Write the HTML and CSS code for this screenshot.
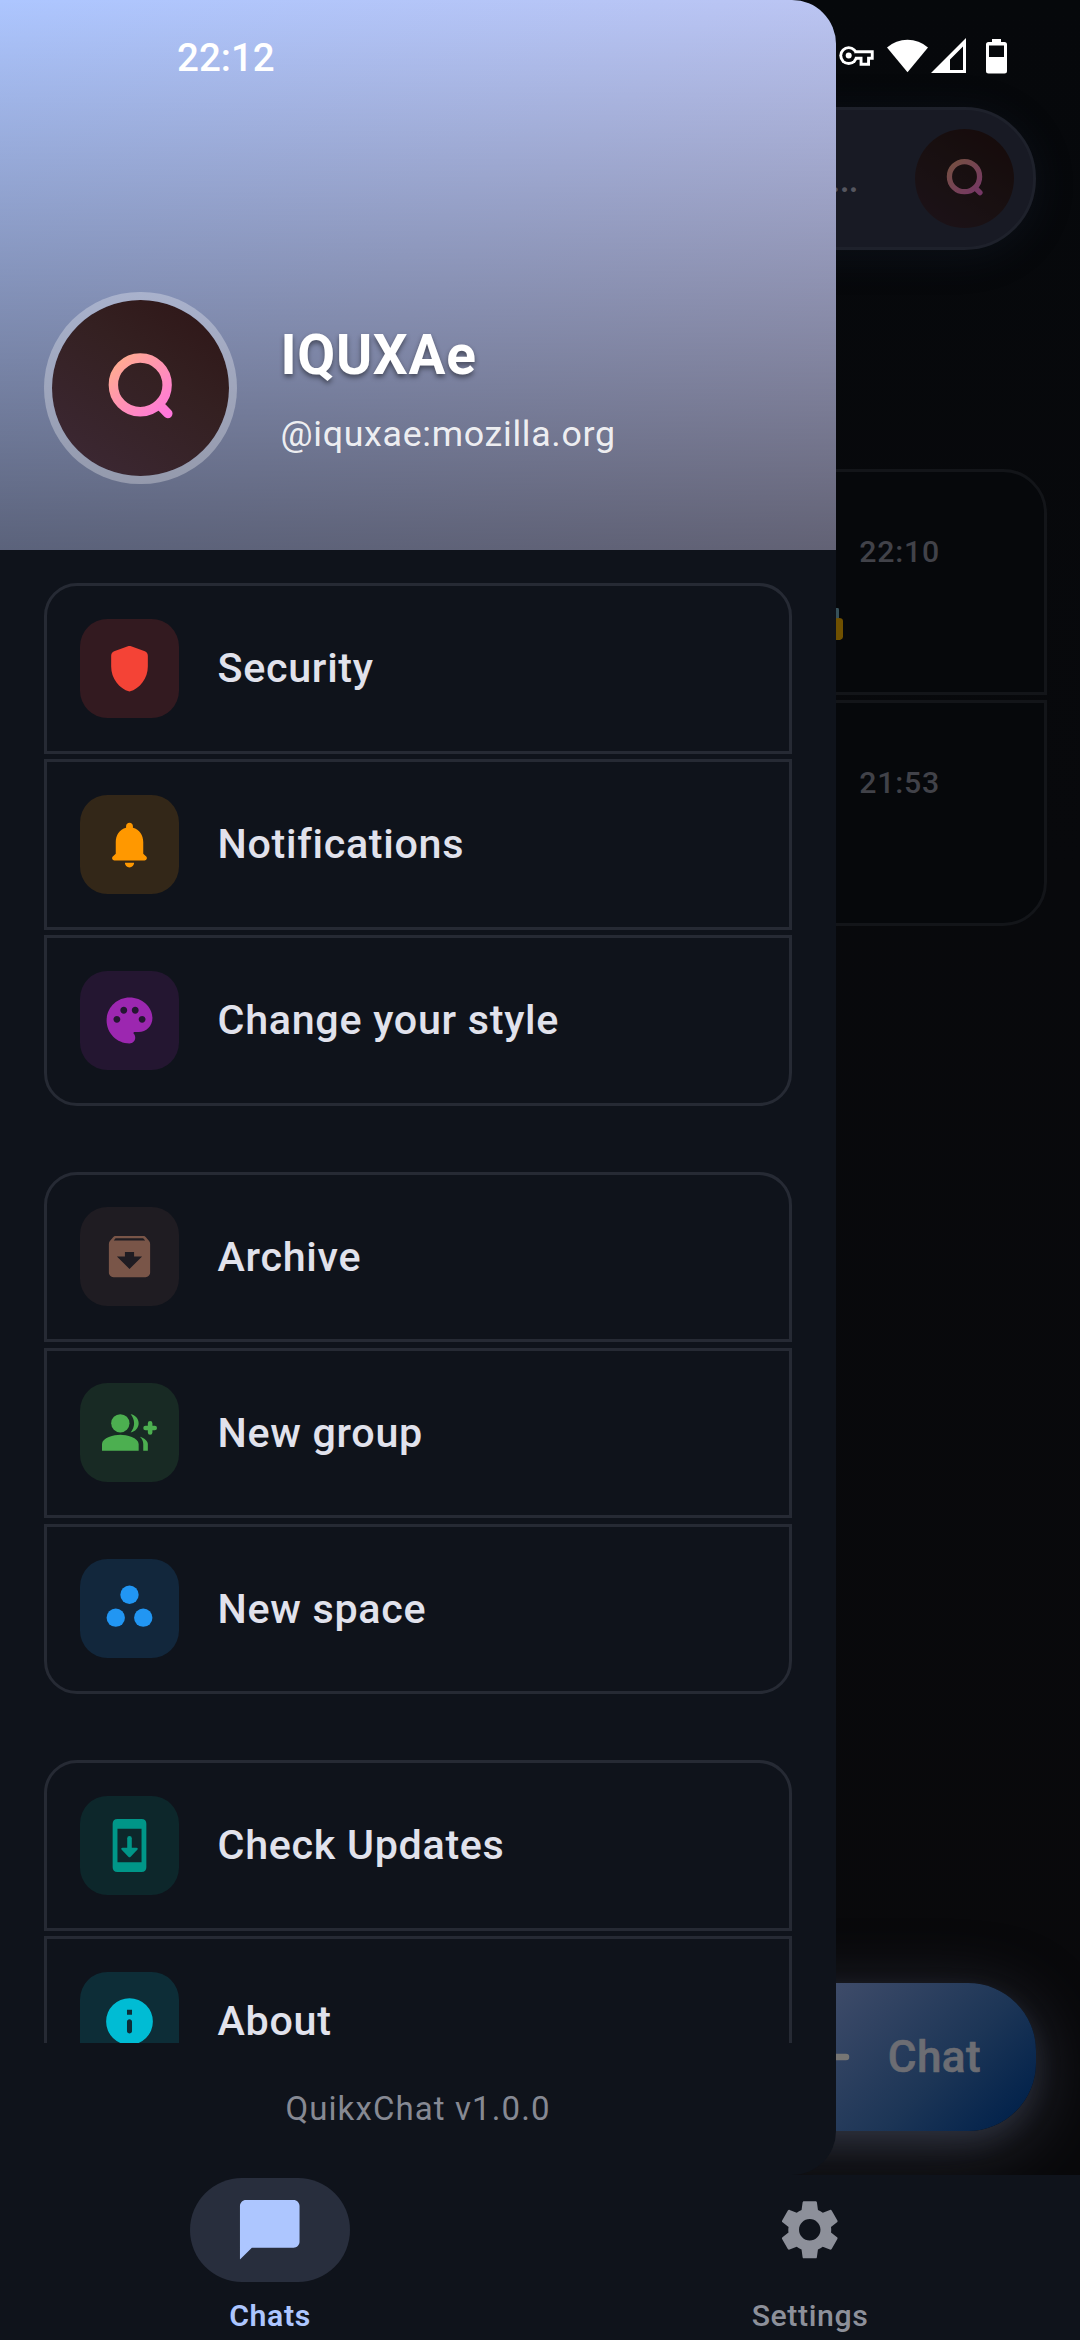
FILE: index.html
```html
<!DOCTYPE html>
<html lang="en">
<head>
<meta charset="utf-8">
<title>QuikxChat</title>
<link rel="stylesheet" href="styles.css">
</head>
<body>
<svg class="defs" width="0" height="0" aria-hidden="true">
  <defs>
    <linearGradient id="q-stroke" gradientUnits="userSpaceOnUse" x1="66" y1="60" x2="116" y2="114">
      <stop offset="0" stop-color="#ffab91"/><stop offset="1" stop-color="#ff76dc"/>
    </linearGradient>
    <symbol id="logo-q" viewBox="0 0 176 176">
      <circle cx="88" cy="84.7" r="26.8" fill="none" stroke="url(#q-stroke)" stroke-width="9.4"/>
      <path d="M107 104.5l8.5 8.7" fill="none" stroke="url(#q-stroke)" stroke-width="9.4" stroke-linecap="round"/>
    </symbol>
  </defs>
</svg>
<div class="app">
  <main class="chats">
    <div class="search"><span class="search-hint">…</span><svg class="avatar avatar-small"><use href="#logo-q"/></svg></div>
    <div class="chat-list">
      <article class="chat first">
        <time>22:10</time>
        <svg class="lock" width="30" height="32" viewBox="0 0 30 32"><path d="M7 13V2h16.500v12" fill="none" stroke="#37515a" stroke-width="5" stroke-linejoin="round"/><path d="M0 12l26-2q4 0 4 3v16q0 2-3 3H0z" fill="#6f5000"/></svg>
      </article>
      <article class="chat last"><time>21:53</time></article>
    </div>
    <button class="fab"><svg width="42" height="42" viewBox="0 0 42 42"><path d="M7 21h28M21 7v28" stroke="#777674" stroke-width="6.5" stroke-linecap="round"/></svg><span>Chat</span></button>
  </main>

  <nav class="bottom-nav">
    <div class="tab active">
      <span class="pill"><svg viewBox="0 0 24 24"><path d="M20 2H4c-1.1 0-2 .9-2 2v18l4-4h14c1.1 0 2-.9 2-2V4c0-1.100-.9-2-2-2z"/></svg></span>
      <span>Chats</span>
    </div>
    <div class="tab">
      <span class="pill"><svg viewBox="0 0 24 24"><path d="M19.14 12.94c.04-.3.06-.61.06-.94 0-.32-.02-.64-.07-.94l2.030-1.580c.18-.14.23-.41.12-.61l-1.920-3.320c-.12-.22-.37-.29-.59-.22l-2.390.96c-.5-.38-1.030-.7-1.620-.94l-.36-2.540c-.04-.24-.24-.41-.48-.41h-3.840c-.24 0-.43.17-.47.41l-.36 2.540c-.59.24-1.130.57-1.620.94l-2.390-.96c-.22-.08-.47 0-.59.22L2.740 8.870c-.12.21-.08.47.12.61l2.030 1.580c-.05.3-.09.63-.09.94s.02.64.07.94l-2.030 1.580c-.18.14-.23.41-.12.61l1.920 3.320c.12.22.37.29.59.22l2.390-.96c.5.38 1.030.7 1.620.94l.36 2.540c.05.24.24.41.48.41h3.840c.24 0 .44-.17.47-.41l.36-2.540c.59-.24 1.130-.56 1.620-.94l2.390.96c.22.08.47 0 .59-.22l1.920-3.320c.12-.22.07-.47-.12-.61l-2.010-1.580zM12 15.600c-1.980 0-3.600-1.620-3.600-3.600s1.620-3.600 3.600-3.600 3.600 1.620 3.600 3.600-1.620 3.600-3.600 3.600z"/></svg></span>
      <span>Settings</span>
    </div>
  </nav>

  <aside class="drawer">
    <header class="profile">
      <svg class="avatar"><use href="#logo-q"/></svg>
      <div class="who"><h1>IQUXAe</h1><p>@iquxae:mozilla.org</p></div>
    </header>
    <div class="menu">
      <section class="group">
        <a class="item red"><span class="icon"><svg viewBox="0 0 24 24"><path d="M11.3 2.26l-6 2.25C4.52 4.81 4 5.55 4 6.39v4.7c0 5.05 3.41 9.76 8 10.91 4.59-1.15 8-5.86 8-10.91v-4.7c0-.83-.52-1.580-1.300-1.870l-6-2.250c-.45-.18-.95-.18-1.400-.01z"/></svg></span>Security</a>
        <a class="item orange"><span class="icon"><svg viewBox="0 0 24 24"><path d="M12 22c1.100 0 2-.9 2-2h-4c0 1.100.89 2 2 2zm6-6v-5c0-3.070-1.640-5.640-4.500-6.320V4c0-.83-.67-1.500-1.500-1.500s-1.500.67-1.500 1.500v.68C7.630 5.360 6 7.920 6 11v5l-1.290 1.290c-.63.63-.19 1.710.7 1.710h13.170c.89 0 1.340-1.080.71-1.710L18 16z"/></svg></span>Notifications</a>
        <a class="item purple"><span class="icon"><svg viewBox="0 0 24 24"><path d="M12 2C6.490 2 2 6.490 2 12s4.490 10 10 10c1.380 0 2.500-1.120 2.500-2.500 0-.61-.23-1.200-.64-1.670-.08-.1-.13-.21-.13-.33 0-.28.22-.5.5-.5H16c3.310 0 6-2.690 6-6C22 6.040 17.510 2 12 2zm5.500 11c-.83 0-1.500-.67-1.500-1.500s.67-1.500 1.500-1.500 1.500.67 1.500 1.500-.67 1.500-1.500 1.500zm-3-4c-.83 0-1.500-.67-1.500-1.500S13.670 6 14.500 6s1.500.67 1.500 1.500S15.330 9 14.500 9zM5 11.500c0-.83.67-1.500 1.500-1.500s1.500.67 1.500 1.500S7.330 13 6.500 13 5 12.330 5 11.500zm6-4c0 .83-.67 1.500-1.500 1.500S8 8.330 8 7.500 8.670 6 9.500 6s1.500.67 1.500 1.500z"/></svg></span>Change your style</a>
      </section>
      <section class="group">
        <a class="item brown"><span class="icon"><svg viewBox="0 0 24 24"><path d="M20.540 5.230l-1.390-1.680C18.880 3.210 18.470 3 18 3H6c-.47 0-.88.21-1.160.55L3.460 5.230C3.170 5.570 3 6.020 3 6.500V19c0 1.100.9 2 2 2h14c1.100 0 2-.9 2-2V6.500c0-.48-.17-.93-.46-1.270zM12 17.500L6.500 12H10v-2h4v2h3.500L12 17.500zM5.120 5l.81-1h12l.94 1H5.120z"/></svg></span>Archive</a>
        <a class="item green"><span class="icon"><svg viewBox="0 0 24 24"><circle cx="8" cy="8" r="4"/><path d="M8 13c-2.670 0-8 1.340-8 4v3h16v-3c0-2.660-5.330-4-8-4zM12.510 4.050C13.430 5.110 14 6.490 14 8s-.57 2.890-1.490 3.950C14.470 11.700 16 10.040 16 8s-1.530-3.700-3.490-3.950zM16.530 13.830C17.420 14.660 18 15.700 18 17v3h2v-3c0-1.450-1.590-2.510-3.470-3.170z"/><path d="M21 8v4M19 10h4" stroke="currentColor" stroke-width="2" stroke-linecap="round"/></svg></span>New group</a>
        <a class="item blue"><span class="icon"><svg viewBox="0 0 24 24"><circle cx="12" cy="6" r="4"/><circle cx="6" cy="16" r="4"/><circle cx="18" cy="16" r="4"/></svg></span>New space</a>
      </section>
      <section class="group">
        <a class="item teal"><span class="icon"><svg viewBox="0 0 24 24"><path fill-rule="evenodd" d="M7 1h10q2 0 2 2v18q0 2-2 2H7q-2 0-2-2V3q0-2 2-2zM7 5v14h10V5z" transform="translate(-.6 -.6) scale(1.050)"/><path d="M12 8.800v5" stroke="currentColor" stroke-width="2" stroke-linecap="round"/><path d="M9 13h6q1 .1.4.9l-2.900 3q-.5.500-1 0l-2.900-3q-.6-.8.4-.9z"/></svg></span>Check Updates</a>
        <a class="item cyan"><span class="icon"><svg viewBox="0 0 24 24"><path fill-rule="evenodd" d="M12 1.800a10.200 10.200 0 1 0 0 20.400 10.200 10.200 0 0 0 0-20.400zm-1.100 5.100h2.200v2.200h-2.200zm1.100 4.100c.6 0 1.100.5 1.100 1.100v4c0 .6-.5 1.100-1.100 1.100s-1.100-.5-1.100-1.100v-4c0-.6.5-1.100 1.100-1.100z"/></svg></span>About</a>
      </section>
    </div>
    <footer class="version">QuikxChat v1.0.0</footer>
  </aside>

  <div class="status">
    <span class="clock">22:12</span>
    <svg class="status-icons" width="170" height="40" viewBox="838 36 170 40" fill="#fff">
      <circle cx="848.700" cy="55.600" r="9.400"/>
      <path d="M854 50.200h19.700v9.600h-3.700v6h-10.400v-6H854z"/>
      <circle cx="848.700" cy="55.600" r="6.500" fill="#06080b"/>
      <path d="M855 53.200h15.800v3.600h-3.700v6h-4.600v-6H855z" fill="#06080b"/>
      <circle cx="848.700" cy="55.600" r="3"/>
      <path d="M887 47.500a31 31 0 0 1 41 0l-20.500 24.700z"/>
      <path fill-rule="evenodd" d="M966 38v35h-35zM963 46.500L950 59.500V70h13z"/>
      <path fill-rule="evenodd" d="M992 39h9v3h3.500q2.500 0 2.500 2.500v26.500q0 2.500-2.500 2.500h-16q-2.500 0-2.500-2.500V44.500q0-2.500 2.500-2.500h3.500zM989 45.500V57h15V45.500z"/>
    </svg>
  </div>
</div>
</body>
</html>
```
FILE: styles.css
```css
* { box-sizing: border-box; }

body {
  margin: 0;
  font-family: Roboto, sans-serif;
  background: #08090b;
}

.defs { position: absolute; }

.app {
  position: relative;
  display: flex;
  flex-direction: column;
  width: 1080px;
  height: 2340px;
  overflow: hidden;
}

/* Dimmed chat screen behind the open drawer */
.chats {
  flex: 1;
  display: flex;
  flex-direction: column;
  padding: 106.5px 33px 44px 44px;
  background: linear-gradient(#06080b, #08090c 40%, #09090b);
  overflow: hidden;
}

.search {
  display: flex;
  align-items: center;
  justify-content: flex-end;
  gap: 56px;
  height: 143px;
  margin-right: 11px;
  padding-right: 19px;
  border: 3px solid #1e212b;
  border-radius: 71.5px;
  background: #181a24;
  box-shadow: 0 6px 40px rgba(40, 60, 90, .17);
}

.search-hint {
  padding-bottom: 3px;
  font-size: 44px;
  line-height: 52px;
  color: #55565f;
}

.avatar {
  flex: none;
  width: 192.5px;
  height: 192.5px;
  border: 8.25px solid rgba(255, 255, 255, .3);
  border-radius: 50%;
  background: linear-gradient(35deg, #3d2936, #342021 60%, #2e1516) padding-box;
}

.avatar-small {
  width: 99px;
  height: 99px;
  border: 0;
  filter: brightness(.46);
}

.chat-list {
  display: flex;
  flex-direction: column;
  gap: 5.5px;
  margin-top: 219.5px;
}

.chat {
  display: flex;
  flex-direction: column;
  align-items: flex-end;
  justify-content: space-between;
  height: 225.5px;
  padding: 62px 104px 52px;
  border: 3px solid #131519;
  background: #06080b;
}

.chat.first { border-radius: 44px 44px 0 0; }
.chat.last { border-radius: 0 0 44px 44px; }

.chat time {
  font-size: 30.25px;
  font-weight: 500;
  line-height: 36px;
  letter-spacing: .8px;
  color: #414249;
}

.lock { margin-right: 97px; }

.fab {
  display: flex;
  align-items: center;
  justify-content: flex-end;
  align-self: flex-end;
  gap: 35px;
  width: 330px;
  height: 148.5px;
  margin: auto 11px 0 0;
  padding: 0 55px;
  border: 0;
  border-radius: 68px;
  background: linear-gradient(135deg, #4f5a75, #3c4a68 30%, #1c3556 68%, #02224b 93%);
  box-shadow: 0 14px 66px rgba(82, 88, 110, .5), 0 10px 24px rgba(60, 66, 84, .3);
  font: 500 44px/52px Roboto, sans-serif;
  letter-spacing: .4px;
  color: #6c6d73;
  -webkit-text-stroke: .6px #6c6d73;
}

/* Bottom navigation */
.bottom-nav {
  position: relative;
  display: flex;
  height: 165px;
  background: #0f131b;
}

.tab {
  flex: 1;
  display: flex;
  flex-direction: column;
  align-items: center;
  gap: 16px;
  padding-top: 2.75px;
  font-size: 30.25px;
  font-weight: 500;
  line-height: 36px;
  letter-spacing: .6px;
  color: #8d909a;
}

.tab.active {
  font-weight: 600;
  color: #adc6ff;
}

.pill {
  display: flex;
  align-items: center;
  justify-content: center;
  width: 160px;
  height: 104.5px;
  border-radius: 53px;
}

.active .pill { background: #282e3d; }

.pill svg {
  width: 71.5px;
  height: 71.5px;
  fill: currentColor;
}

/* Drawer */
.drawer {
  position: absolute;
  top: 0;
  left: 0;
  display: flex;
  flex-direction: column;
  width: 836px;
  height: 2175px;
  border-radius: 0 44px 44px 0;
  background: #0f131b;
  overflow: hidden;
}

.profile {
  flex: none;
  display: flex;
  align-items: flex-end;
  gap: 44px;
  height: 550px;
  padding: 0 44px 66px;
  background:
    linear-gradient(transparent, rgba(0, 0, 0, .5)),
    linear-gradient(135deg, #adc6ff, #c4c4ea);
}

.who { padding-bottom: 28px; }

.who h1 {
  margin: 0 0 24px;
  font-size: 55px;
  font-weight: 700;
  line-height: 66px;
  letter-spacing: .7px;
  color: #fff;
  text-shadow: 0 2.75px 5.5px rgba(0, 0, 0, .45);
}

.who p {
  margin: 0;
  font-size: 35.75px;
  line-height: 44px;
  letter-spacing: .7px;
  color: rgba(255, 255, 255, .9);
}

.menu {
  flex: 1;
  display: flex;
  flex-direction: column;
  gap: 66px;
  min-height: 0;
  padding: 33px 44px 0;
  overflow: hidden;
}

.group {
  display: flex;
  flex-direction: column;
  gap: 5.5px;
}

.item {
  flex: none;
  display: flex;
  align-items: center;
  gap: 38.5px;
  height: 170.5px;
  padding: 0 33px;
  border: 3px solid #262a34;
  font-size: 41.25px;
  font-weight: 500;
  letter-spacing: .7px;
  color: #e1e2ec;
}

.item:first-child { border-radius: 33px 33px 0 0; }
.group .item:nth-child(3) { border-radius: 0 0 33px 33px; }

.icon {
  display: flex;
  align-items: center;
  justify-content: center;
  width: 99px;
  height: 99px;
  border-radius: 27.5px;
}

.icon svg {
  width: 55px;
  height: 55px;
  fill: currentColor;
}

.red .icon { color: #f44336; background: #331a20; }
.orange .icon { color: #ff9800; background: #332718; }
.purple .icon { color: #9c27b0; background: #241631; }
.brown .icon { color: #795548; background: #1f1c22; }
.green .icon { color: #4caf50; background: #182a24; }
.blue .icon { color: #2196f3; background: #12273c; }
.teal .icon { color: #009688; background: #0d272b; }
.cyan .icon { color: #00bcd4; background: #0d2d37; }

.version {
  flex: none;
  height: 132px;
  padding-top: 46px;
  text-align: center;
  font-size: 33px;
  line-height: 40px;
  letter-spacing: 1.1px;
  color: #868993;
}

/* System status bar */
.status {
  position: absolute;
  top: 0;
  left: 0;
  display: flex;
  justify-content: space-between;
  width: 1080px;
  padding: 36px 72px 0 177px;
}

.clock {
  font-size: 38.5px;
  font-weight: 500;
  line-height: 44px;
  color: #fff;
}
```
